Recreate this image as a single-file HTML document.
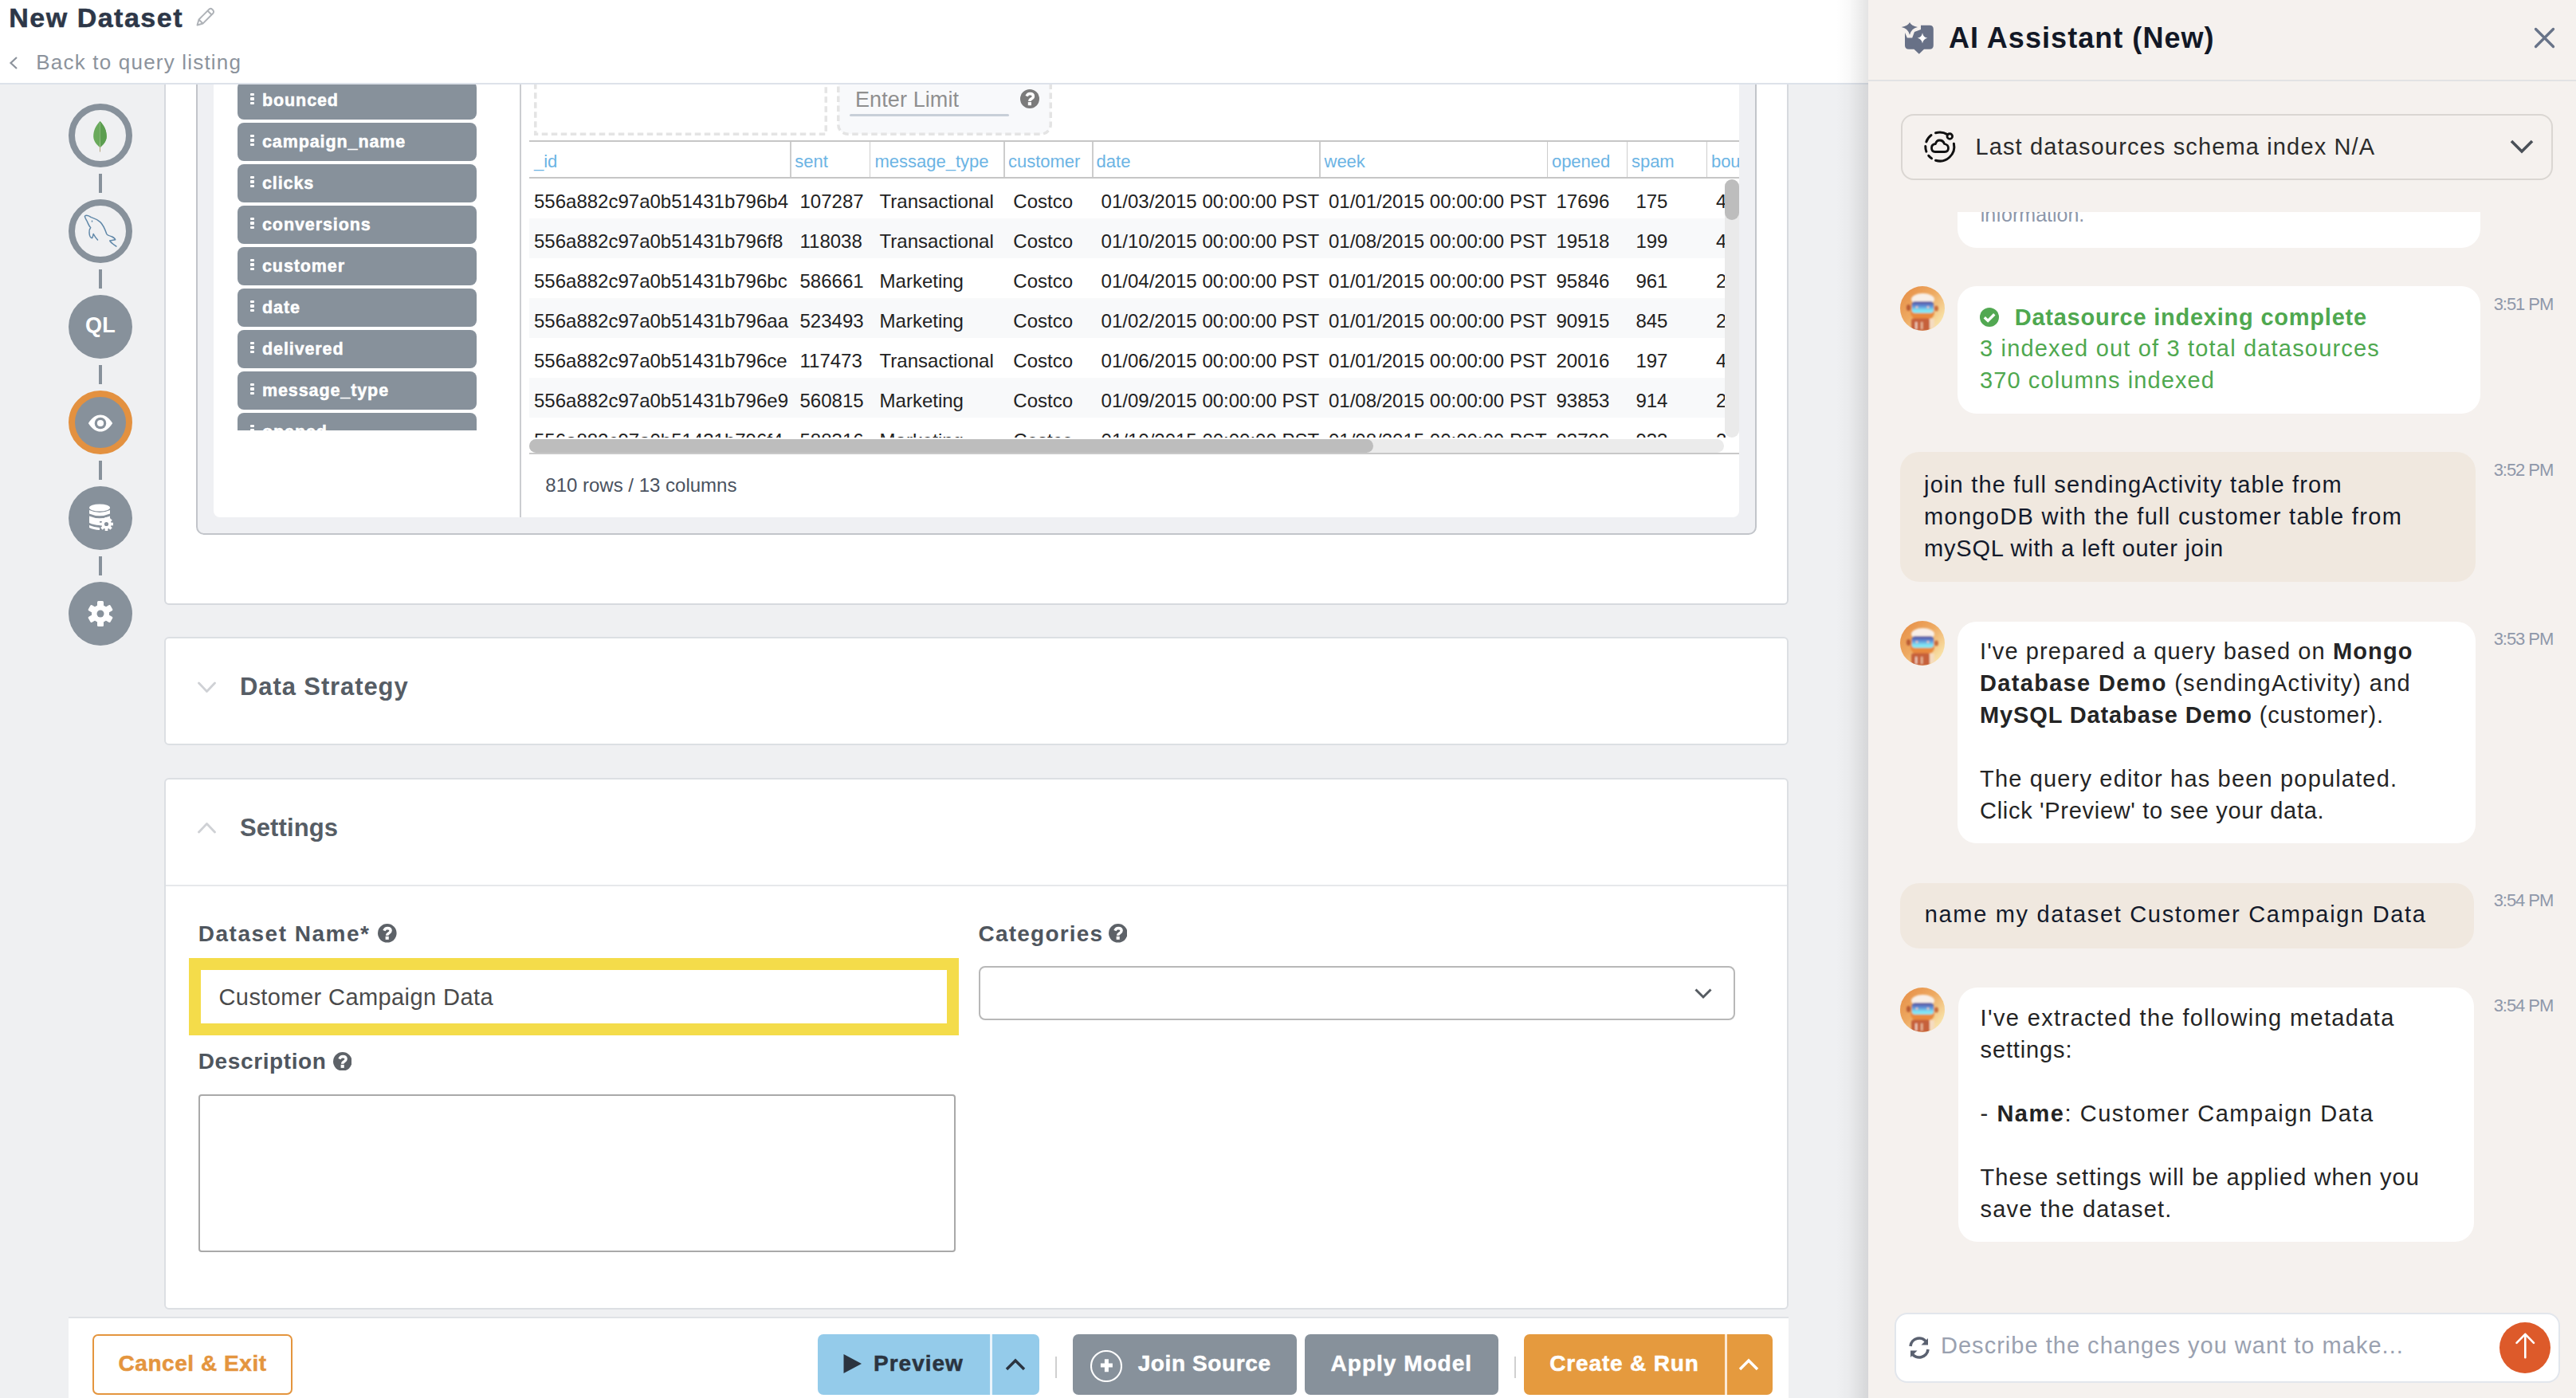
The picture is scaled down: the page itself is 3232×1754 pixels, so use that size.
<!DOCTYPE html>
<html><head><meta charset="utf-8"><style>
html,body{margin:0;padding:0;}
body{width:3232px;height:1754px;position:relative;overflow:hidden;background:#eff0f2;font-family:"Liberation Sans",sans-serif;}
.a{position:absolute;}
.t{position:absolute;line-height:1;white-space:nowrap;}
b{font-weight:700;}
</style></head><body>
<div class="a" style="left:206.0px;top:60.0px;width:2038.0px;height:698.6px;background:#fff;border:2px solid #d6d9de;border-radius:6px;box-sizing:border-box;"></div>
<div class="a" style="left:246.0px;top:40.0px;width:1958.0px;height:631.0px;background:#eff0f3;border:2px solid #c2c5ca;border-radius:10px;box-sizing:border-box;"></div>
<div class="a" style="left:268.0px;top:40.0px;width:1914.0px;height:609.0px;background:#fff;border-radius:0 0 8px 8px;"></div>
<div class="a" style="left:652.0px;top:40.0px;width:2.0px;height:609.0px;background:#cbcdd1;"></div>
<div class="a" style="left:298px;top:100px;width:300px;height:439.5px;overflow:hidden;"><div class="a" style="left:0;top:2px;width:300px;height:48px;background:#87919b;border-radius:8px;"></div><div class="a" style="left:16px;top:16.5px;width:4.5px;height:3.6px;background:#fff;border-radius:1px;"></div><div class="a" style="left:16px;top:22.0px;width:4.5px;height:3.6px;background:#fff;border-radius:1px;"></div><div class="a" style="left:16px;top:27.5px;width:4.5px;height:3.6px;background:#fff;border-radius:1px;"></div><div class="t" style="left:31px;top:15.7px;font-size:21.5px;color:#fff;font-weight:700;letter-spacing:0.9px;-webkit-text-stroke:0.5px #fff;">bounced</div><div class="a" style="left:0;top:54px;width:300px;height:48px;background:#87919b;border-radius:8px;"></div><div class="a" style="left:16px;top:68.5px;width:4.5px;height:3.6px;background:#fff;border-radius:1px;"></div><div class="a" style="left:16px;top:74.0px;width:4.5px;height:3.6px;background:#fff;border-radius:1px;"></div><div class="a" style="left:16px;top:79.5px;width:4.5px;height:3.6px;background:#fff;border-radius:1px;"></div><div class="t" style="left:31px;top:67.7px;font-size:21.5px;color:#fff;font-weight:700;letter-spacing:0.9px;-webkit-text-stroke:0.5px #fff;">campaign_name</div><div class="a" style="left:0;top:106px;width:300px;height:48px;background:#87919b;border-radius:8px;"></div><div class="a" style="left:16px;top:120.5px;width:4.5px;height:3.6px;background:#fff;border-radius:1px;"></div><div class="a" style="left:16px;top:126.0px;width:4.5px;height:3.6px;background:#fff;border-radius:1px;"></div><div class="a" style="left:16px;top:131.5px;width:4.5px;height:3.6px;background:#fff;border-radius:1px;"></div><div class="t" style="left:31px;top:119.7px;font-size:21.5px;color:#fff;font-weight:700;letter-spacing:0.9px;-webkit-text-stroke:0.5px #fff;">clicks</div><div class="a" style="left:0;top:158px;width:300px;height:48px;background:#87919b;border-radius:8px;"></div><div class="a" style="left:16px;top:172.5px;width:4.5px;height:3.6px;background:#fff;border-radius:1px;"></div><div class="a" style="left:16px;top:178.0px;width:4.5px;height:3.6px;background:#fff;border-radius:1px;"></div><div class="a" style="left:16px;top:183.5px;width:4.5px;height:3.6px;background:#fff;border-radius:1px;"></div><div class="t" style="left:31px;top:171.7px;font-size:21.5px;color:#fff;font-weight:700;letter-spacing:0.9px;-webkit-text-stroke:0.5px #fff;">conversions</div><div class="a" style="left:0;top:210px;width:300px;height:48px;background:#87919b;border-radius:8px;"></div><div class="a" style="left:16px;top:224.5px;width:4.5px;height:3.6px;background:#fff;border-radius:1px;"></div><div class="a" style="left:16px;top:230.0px;width:4.5px;height:3.6px;background:#fff;border-radius:1px;"></div><div class="a" style="left:16px;top:235.5px;width:4.5px;height:3.6px;background:#fff;border-radius:1px;"></div><div class="t" style="left:31px;top:223.7px;font-size:21.5px;color:#fff;font-weight:700;letter-spacing:0.9px;-webkit-text-stroke:0.5px #fff;">customer</div><div class="a" style="left:0;top:262px;width:300px;height:48px;background:#87919b;border-radius:8px;"></div><div class="a" style="left:16px;top:276.5px;width:4.5px;height:3.6px;background:#fff;border-radius:1px;"></div><div class="a" style="left:16px;top:282.0px;width:4.5px;height:3.6px;background:#fff;border-radius:1px;"></div><div class="a" style="left:16px;top:287.5px;width:4.5px;height:3.6px;background:#fff;border-radius:1px;"></div><div class="t" style="left:31px;top:275.7px;font-size:21.5px;color:#fff;font-weight:700;letter-spacing:0.9px;-webkit-text-stroke:0.5px #fff;">date</div><div class="a" style="left:0;top:314px;width:300px;height:48px;background:#87919b;border-radius:8px;"></div><div class="a" style="left:16px;top:328.5px;width:4.5px;height:3.6px;background:#fff;border-radius:1px;"></div><div class="a" style="left:16px;top:334.0px;width:4.5px;height:3.6px;background:#fff;border-radius:1px;"></div><div class="a" style="left:16px;top:339.5px;width:4.5px;height:3.6px;background:#fff;border-radius:1px;"></div><div class="t" style="left:31px;top:327.7px;font-size:21.5px;color:#fff;font-weight:700;letter-spacing:0.9px;-webkit-text-stroke:0.5px #fff;">delivered</div><div class="a" style="left:0;top:366px;width:300px;height:48px;background:#87919b;border-radius:8px;"></div><div class="a" style="left:16px;top:380.5px;width:4.5px;height:3.6px;background:#fff;border-radius:1px;"></div><div class="a" style="left:16px;top:386.0px;width:4.5px;height:3.6px;background:#fff;border-radius:1px;"></div><div class="a" style="left:16px;top:391.5px;width:4.5px;height:3.6px;background:#fff;border-radius:1px;"></div><div class="t" style="left:31px;top:379.7px;font-size:21.5px;color:#fff;font-weight:700;letter-spacing:0.9px;-webkit-text-stroke:0.5px #fff;">message_type</div><div class="a" style="left:0;top:418px;width:300px;height:48px;background:#87919b;border-radius:8px;"></div><div class="a" style="left:16px;top:432.5px;width:4.5px;height:3.6px;background:#fff;border-radius:1px;"></div><div class="a" style="left:16px;top:438.0px;width:4.5px;height:3.6px;background:#fff;border-radius:1px;"></div><div class="a" style="left:16px;top:443.5px;width:4.5px;height:3.6px;background:#fff;border-radius:1px;"></div><div class="t" style="left:31px;top:431.7px;font-size:21.5px;color:#fff;font-weight:700;letter-spacing:0.9px;-webkit-text-stroke:0.5px #fff;">opened</div></div>
<svg class="a" style="left:670.0px;top:40.0px;" width="368.0" height="130.0" viewBox="0 0 368 130" preserveAspectRatio="none"><rect x="1.75" y="1.75" width="364.5" height="126.5" fill="none" stroke="#e4e4e4" stroke-width="3.5" stroke-dasharray="7.5 4.5"/></svg>
<svg class="a" style="left:1050.0px;top:40.0px;" width="270.0" height="130.0" viewBox="0 0 270 130" preserveAspectRatio="none"><rect x="1.75" y="1.75" width="266.5" height="126.5" rx="12" fill="#f8f9fb" stroke="#e4e4e4" stroke-width="3.5" stroke-dasharray="7.5 4.5"/></svg>
<div class="t" style="left:1073.0px;top:111.5px;font-size:27px;color:#8f8f8f;letter-spacing:0.1px;">Enter Limit</div>
<div class="a" style="left:1066.0px;top:143.2px;width:200.0px;height:2.6px;background:#c8cfd8;border-radius:2px;"></div>
<svg class="a" style="left:1280.0px;top:112.0px;" width="24.0" height="24.0" viewBox="0 0 24 24" preserveAspectRatio="none"><circle cx="12" cy="12" r="12" fill="#7b7b7b"/><path d="M8.1 8.7 Q9.3 5.5 12.4 5.5 Q16.3 5.6 16.4 8.7 Q16.4 10.7 14.2 11.9 Q11.9 13.1 11.9 15.1" fill="none" stroke="#fff" stroke-width="3.5"/><rect x="9.8" y="16.1" width="4.2" height="4.1" fill="#fff"/></svg>
<div class="a" style="left:664.0px;top:176.0px;width:1518.0px;height:2.0px;background:#c6c6c6;"></div>
<div class="a" style="left:664.0px;top:222.0px;width:1518.0px;height:2.0px;background:#c6c6c6;"></div>
<div class="a" style="left:991.2px;top:178.0px;width:1.6px;height:44.0px;background:#cdcdcd;"></div>
<div class="a" style="left:1090.8px;top:178.0px;width:1.6px;height:44.0px;background:#cdcdcd;"></div>
<div class="a" style="left:1259.4px;top:178.0px;width:1.6px;height:44.0px;background:#cdcdcd;"></div>
<div class="a" style="left:1370.1px;top:178.0px;width:1.6px;height:44.0px;background:#cdcdcd;"></div>
<div class="a" style="left:1655.1px;top:178.0px;width:1.6px;height:44.0px;background:#cdcdcd;"></div>
<div class="a" style="left:1940.9px;top:178.0px;width:1.6px;height:44.0px;background:#cdcdcd;"></div>
<div class="a" style="left:2040.9px;top:178.0px;width:1.6px;height:44.0px;background:#cdcdcd;"></div>
<div class="a" style="left:2140.9px;top:178.0px;width:1.6px;height:44.0px;background:#cdcdcd;"></div>
<div class="a" style="left:0;top:0;width:2182px;height:224px;overflow:hidden;"><div class="t" style="left:670px;top:192.4px;font-size:22px;color:#6cb4e4;">_id</div><div class="t" style="left:997.2px;top:192.4px;font-size:22px;color:#6cb4e4;">sent</div><div class="t" style="left:1097.4px;top:192.4px;font-size:22px;color:#6cb4e4;">message_type</div><div class="t" style="left:1264.9px;top:192.4px;font-size:22px;color:#6cb4e4;">customer</div><div class="t" style="left:1375.6px;top:192.4px;font-size:22px;color:#6cb4e4;">date</div><div class="t" style="left:1661.5px;top:192.4px;font-size:22px;color:#6cb4e4;">week</div><div class="t" style="left:1946.9px;top:192.4px;font-size:22px;color:#6cb4e4;">opened</div><div class="t" style="left:2046.9px;top:192.4px;font-size:22px;color:#6cb4e4;">spam</div><div class="t" style="left:2146.9px;top:192.4px;font-size:22px;color:#6cb4e4;">bounced</div></div>
<div class="a" style="left:0;top:224px;width:2165px;height:324.5px;overflow:hidden;"><div class="t" style="left:670px;top:16.7px;font-size:24px;color:#222;">556a882c97a0b51431b796b4</div><div class="t" style="left:1003.5px;top:16.7px;font-size:24px;color:#222;">107287</div><div class="t" style="left:1103.6px;top:16.7px;font-size:24px;color:#222;">Transactional</div><div class="t" style="left:1271.3px;top:16.7px;font-size:24px;color:#222;">Costco</div><div class="t" style="left:1381.6px;top:16.7px;font-size:24px;color:#222;">01/03/2015 00:00:00 PST</div><div class="t" style="left:1667px;top:16.7px;font-size:24px;color:#222;">01/01/2015 00:00:00 PST</div><div class="t" style="left:1952.5px;top:16.7px;font-size:24px;color:#222;">17696</div><div class="t" style="left:2052.4px;top:16.7px;font-size:24px;color:#222;">175</div><div class="t" style="left:2153px;top:16.7px;font-size:24px;color:#222;">4</div><div class="a" style="left:664px;top:50px;width:1501px;height:50px;background:#f8f9fa;"></div><div class="t" style="left:670px;top:66.7px;font-size:24px;color:#222;">556a882c97a0b51431b796f8</div><div class="t" style="left:1003.5px;top:66.7px;font-size:24px;color:#222;">118038</div><div class="t" style="left:1103.6px;top:66.7px;font-size:24px;color:#222;">Transactional</div><div class="t" style="left:1271.3px;top:66.7px;font-size:24px;color:#222;">Costco</div><div class="t" style="left:1381.6px;top:66.7px;font-size:24px;color:#222;">01/10/2015 00:00:00 PST</div><div class="t" style="left:1667px;top:66.7px;font-size:24px;color:#222;">01/08/2015 00:00:00 PST</div><div class="t" style="left:1952.5px;top:66.7px;font-size:24px;color:#222;">19518</div><div class="t" style="left:2052.4px;top:66.7px;font-size:24px;color:#222;">199</div><div class="t" style="left:2153px;top:66.7px;font-size:24px;color:#222;">4</div><div class="t" style="left:670px;top:116.7px;font-size:24px;color:#222;">556a882c97a0b51431b796bc</div><div class="t" style="left:1003.5px;top:116.7px;font-size:24px;color:#222;">586661</div><div class="t" style="left:1103.6px;top:116.7px;font-size:24px;color:#222;">Marketing</div><div class="t" style="left:1271.3px;top:116.7px;font-size:24px;color:#222;">Costco</div><div class="t" style="left:1381.6px;top:116.7px;font-size:24px;color:#222;">01/04/2015 00:00:00 PST</div><div class="t" style="left:1667px;top:116.7px;font-size:24px;color:#222;">01/01/2015 00:00:00 PST</div><div class="t" style="left:1952.5px;top:116.7px;font-size:24px;color:#222;">95846</div><div class="t" style="left:2052.4px;top:116.7px;font-size:24px;color:#222;">961</div><div class="t" style="left:2153px;top:116.7px;font-size:24px;color:#222;">2</div><div class="a" style="left:664px;top:150px;width:1501px;height:50px;background:#f8f9fa;"></div><div class="t" style="left:670px;top:166.7px;font-size:24px;color:#222;">556a882c97a0b51431b796aa</div><div class="t" style="left:1003.5px;top:166.7px;font-size:24px;color:#222;">523493</div><div class="t" style="left:1103.6px;top:166.7px;font-size:24px;color:#222;">Marketing</div><div class="t" style="left:1271.3px;top:166.7px;font-size:24px;color:#222;">Costco</div><div class="t" style="left:1381.6px;top:166.7px;font-size:24px;color:#222;">01/02/2015 00:00:00 PST</div><div class="t" style="left:1667px;top:166.7px;font-size:24px;color:#222;">01/01/2015 00:00:00 PST</div><div class="t" style="left:1952.5px;top:166.7px;font-size:24px;color:#222;">90915</div><div class="t" style="left:2052.4px;top:166.7px;font-size:24px;color:#222;">845</div><div class="t" style="left:2153px;top:166.7px;font-size:24px;color:#222;">2</div><div class="t" style="left:670px;top:216.7px;font-size:24px;color:#222;">556a882c97a0b51431b796ce</div><div class="t" style="left:1003.5px;top:216.7px;font-size:24px;color:#222;">117473</div><div class="t" style="left:1103.6px;top:216.7px;font-size:24px;color:#222;">Transactional</div><div class="t" style="left:1271.3px;top:216.7px;font-size:24px;color:#222;">Costco</div><div class="t" style="left:1381.6px;top:216.7px;font-size:24px;color:#222;">01/06/2015 00:00:00 PST</div><div class="t" style="left:1667px;top:216.7px;font-size:24px;color:#222;">01/01/2015 00:00:00 PST</div><div class="t" style="left:1952.5px;top:216.7px;font-size:24px;color:#222;">20016</div><div class="t" style="left:2052.4px;top:216.7px;font-size:24px;color:#222;">197</div><div class="t" style="left:2153px;top:216.7px;font-size:24px;color:#222;">4</div><div class="a" style="left:664px;top:250px;width:1501px;height:50px;background:#f8f9fa;"></div><div class="t" style="left:670px;top:266.7px;font-size:24px;color:#222;">556a882c97a0b51431b796e9</div><div class="t" style="left:1003.5px;top:266.7px;font-size:24px;color:#222;">560815</div><div class="t" style="left:1103.6px;top:266.7px;font-size:24px;color:#222;">Marketing</div><div class="t" style="left:1271.3px;top:266.7px;font-size:24px;color:#222;">Costco</div><div class="t" style="left:1381.6px;top:266.7px;font-size:24px;color:#222;">01/09/2015 00:00:00 PST</div><div class="t" style="left:1667px;top:266.7px;font-size:24px;color:#222;">01/08/2015 00:00:00 PST</div><div class="t" style="left:1952.5px;top:266.7px;font-size:24px;color:#222;">93853</div><div class="t" style="left:2052.4px;top:266.7px;font-size:24px;color:#222;">914</div><div class="t" style="left:2153px;top:266.7px;font-size:24px;color:#222;">2</div><div class="t" style="left:670px;top:316.7px;font-size:24px;color:#222;">556a882c97a0b51431b796f4</div><div class="t" style="left:1003.5px;top:316.7px;font-size:24px;color:#222;">588316</div><div class="t" style="left:1103.6px;top:316.7px;font-size:24px;color:#222;">Marketing</div><div class="t" style="left:1271.3px;top:316.7px;font-size:24px;color:#222;">Costco</div><div class="t" style="left:1381.6px;top:316.7px;font-size:24px;color:#222;">01/10/2015 00:00:00 PST</div><div class="t" style="left:1667px;top:316.7px;font-size:24px;color:#222;">01/08/2015 00:00:00 PST</div><div class="t" style="left:1952.5px;top:316.7px;font-size:24px;color:#222;">93709</div><div class="t" style="left:2052.4px;top:316.7px;font-size:24px;color:#222;">933</div><div class="t" style="left:2153px;top:316.7px;font-size:24px;color:#222;">2</div></div>
<div class="a" style="left:2164.2px;top:224.5px;width:17.4px;height:324.5px;background:#eaeaea;border-radius:9px;"></div>
<div class="a" style="left:2164.2px;top:224.5px;width:17.4px;height:51.2px;background:#bdbdbd;border-radius:9px;"></div>
<div class="a" style="left:664.0px;top:550.5px;width:1499.0px;height:17.5px;background:#ebebeb;border-radius:9px;"></div>
<div class="a" style="left:664.0px;top:550.5px;width:1059.0px;height:17.5px;background:#bdbdbd;border-radius:9px;"></div>
<div class="a" style="left:664.0px;top:568.0px;width:1518.0px;height:2.0px;background:#c8c8c8;"></div>
<div class="t" style="left:684.3px;top:597.0px;font-size:24px;color:#4a5260;">810 rows / 13 columns</div>
<div class="a" style="left:206.0px;top:799.1px;width:2038.0px;height:136.3px;background:#fff;border:2px solid #dcdfe3;border-radius:6px;box-sizing:border-box;"></div>
<svg class="a" style="left:247.0px;top:853.0px;" width="25.0" height="18.0" viewBox="0 0 25 18" preserveAspectRatio="none"><path d="M2.5 4 L12.5 14.5 L22.5 4" fill="none" stroke="#cfd1d5" stroke-width="2.8" stroke-linecap="round" stroke-linejoin="round"/></svg>
<div class="t" style="left:301.0px;top:846.4px;font-size:31px;color:#565d65;font-weight:700;letter-spacing:0.9px;">Data Strategy</div>
<div class="a" style="left:206.0px;top:975.9px;width:2038.0px;height:667.6px;background:#fff;border:2px solid #dcdfe3;border-radius:6px;box-sizing:border-box;"></div>
<svg class="a" style="left:247.0px;top:1030.0px;" width="25.0" height="18.0" viewBox="0 0 25 18" preserveAspectRatio="none"><path d="M2.5 14 L12.5 3.5 L22.5 14" fill="none" stroke="#cfd1d5" stroke-width="2.8" stroke-linecap="round" stroke-linejoin="round"/></svg>
<div class="t" style="left:301.0px;top:1022.8px;font-size:31px;color:#565d65;font-weight:700;letter-spacing:0.1px;">Settings</div>
<div class="a" style="left:208.0px;top:1109.5px;width:2034.0px;height:2.0px;background:#e6e8eb;"></div>
<div class="t" style="left:248.8px;top:1158.3px;font-size:28px;color:#4f565e;font-weight:700;letter-spacing:1.5px;">Dataset Name*</div>
<svg class="a" style="left:474.3px;top:1159.2px;" width="23.6" height="23.6" viewBox="0 0 24 24" preserveAspectRatio="none"><circle cx="12" cy="12" r="12" fill="#5d6268"/><path d="M8.1 8.7 Q9.3 5.5 12.4 5.5 Q16.3 5.6 16.4 8.7 Q16.4 10.7 14.2 11.9 Q11.9 13.1 11.9 15.1" fill="none" stroke="#fff" stroke-width="3.5"/><rect x="9.8" y="16.1" width="4.2" height="4.1" fill="#fff"/></svg>
<div class="t" style="left:1227.6px;top:1158.3px;font-size:28px;color:#4f565e;font-weight:700;letter-spacing:1.2px;">Categories</div>
<svg class="a" style="left:1390.8px;top:1159.2px;" width="23.6" height="23.6" viewBox="0 0 24 24" preserveAspectRatio="none"><circle cx="12" cy="12" r="12" fill="#5d6268"/><path d="M8.1 8.7 Q9.3 5.5 12.4 5.5 Q16.3 5.6 16.4 8.7 Q16.4 10.7 14.2 11.9 Q11.9 13.1 11.9 15.1" fill="none" stroke="#fff" stroke-width="3.5"/><rect x="9.8" y="16.1" width="4.2" height="4.1" fill="#fff"/></svg>
<div class="a" style="left:237.0px;top:1202.0px;width:966.0px;height:97.0px;border:15.5px solid #f4dc4a;box-sizing:border-box;background:#fff;"></div>
<div class="t" style="left:274.5px;top:1237.4px;font-size:29px;color:#4a4a4a;letter-spacing:0.42px;">Customer Campaign Data</div>
<div class="t" style="left:248.8px;top:1318.3px;font-size:28px;color:#4f565e;font-weight:700;letter-spacing:0.6px;">Description</div>
<svg class="a" style="left:417.5px;top:1319.5px;" width="23.6" height="23.6" viewBox="0 0 24 24" preserveAspectRatio="none"><circle cx="12" cy="12" r="12" fill="#5d6268"/><path d="M8.1 8.7 Q9.3 5.5 12.4 5.5 Q16.3 5.6 16.4 8.7 Q16.4 10.7 14.2 11.9 Q11.9 13.1 11.9 15.1" fill="none" stroke="#fff" stroke-width="3.5"/><rect x="9.8" y="16.1" width="4.2" height="4.1" fill="#fff"/></svg>
<div class="a" style="left:248.8px;top:1372.8px;width:949.9px;height:198.4px;border:2px solid #a9a9a9;border-radius:4px;box-sizing:border-box;"></div>
<div class="a" style="left:1227.6px;top:1212.3px;width:949.8px;height:67.9px;border:2px solid #b8b8b8;border-radius:8px;box-sizing:border-box;"></div>
<svg class="a" style="left:2125.0px;top:1238.0px;" width="24.0" height="18.0" viewBox="0 0 24 18" preserveAspectRatio="none"><path d="M2.5 3.5 L12 13 L21.5 3.5" fill="none" stroke="#555b61" stroke-width="3"/></svg>
<div class="a" style="left:86.0px;top:1651.8px;width:2158.0px;height:102.2px;background:#fff;border-top:2px solid #dfe2e6;box-sizing:border-box;"></div>
<div class="a" style="left:116.3px;top:1674.3px;width:250.4px;height:75.5px;border:2.2px solid #e4953e;border-radius:7px;box-sizing:border-box;"></div>
<div class="t" style="left:148.5px;top:1697.0px;font-size:28px;color:#e4953e;font-weight:700;letter-spacing:0.55px;-webkit-text-stroke:0.5px #e4953e;">Cancel &amp; Exit</div>
<div class="a" style="left:1026.0px;top:1674.0px;width:278.0px;height:75.5px;background:#94cbea;border-radius:7px;"></div>
<div class="a" style="left:1241.5px;top:1674.0px;width:3.0px;height:75.5px;background:#eaf4fb;"></div>
<svg class="a" style="left:1056.7px;top:1698.0px;" width="25.0" height="26.0" viewBox="0 0 25 26" preserveAspectRatio="none"><path d="M1.5 1 L24 13 L1.5 25 Z" fill="#2b3440"/></svg>
<div class="t" style="left:1096.0px;top:1697.3px;font-size:28px;color:#2b3440;font-weight:700;letter-spacing:1.0px;-webkit-text-stroke:0.5px #2b3440;">Preview</div>
<svg class="a" style="left:1260.0px;top:1702.0px;" width="28.0" height="20.0" viewBox="0 0 28 20" preserveAspectRatio="none"><path d="M3 16 L14 5 L25 16" fill="none" stroke="#2b3440" stroke-width="3.5"/></svg>
<div class="a" style="left:1324.0px;top:1702.0px;width:2.0px;height:27.0px;background:#d0d0d0;"></div>
<div class="a" style="left:1346.0px;top:1674.0px;width:281.0px;height:75.5px;background:#87919b;border-radius:7px;"></div>
<svg class="a" style="left:1368.0px;top:1694.0px;" width="40.0" height="40.0" viewBox="0 0 40 40" preserveAspectRatio="none"><circle cx="20" cy="20" r="19" fill="none" stroke="#fff" stroke-width="2.1"/><path d="M20.4 11.3 V27.2 M12.9 19 H27.9" stroke="#fff" stroke-width="5"/></svg>
<div class="t" style="left:1427.7px;top:1697.3px;font-size:28px;color:#fff;font-weight:700;letter-spacing:0.6px;-webkit-text-stroke:0.5px #fff;">Join Source</div>
<div class="a" style="left:1637.4px;top:1674.0px;width:242.4px;height:75.5px;background:#87919b;border-radius:7px;"></div>
<div class="t" style="left:1669.6px;top:1697.3px;font-size:28px;color:#fff;font-weight:700;letter-spacing:1.0px;-webkit-text-stroke:0.5px #fff;">Apply Model</div>
<div class="a" style="left:1900.0px;top:1702.0px;width:2.0px;height:27.0px;background:#d0d0d0;"></div>
<div class="a" style="left:1912.0px;top:1674.0px;width:312.2px;height:75.5px;background:#e59a3e;border-radius:7px;"></div>
<div class="a" style="left:2164.0px;top:1674.0px;width:3.0px;height:75.5px;background:#fbe9d5;"></div>
<div class="t" style="left:1944.3px;top:1697.3px;font-size:28px;color:#fff;font-weight:700;letter-spacing:0.83px;-webkit-text-stroke:0.5px #fff;">Create &amp; Run</div>
<svg class="a" style="left:2180.0px;top:1702.0px;" width="28.0" height="20.0" viewBox="0 0 28 20" preserveAspectRatio="none"><path d="M3 16 L14 5 L25 16" fill="none" stroke="#fff" stroke-width="3.5"/></svg>
<div class="a" style="left:0.0px;top:0.0px;width:2344.0px;height:104.0px;background:#fff;"></div>
<div class="a" style="left:0.0px;top:104.0px;width:2344.0px;height:2.0px;background:#dde2ea;"></div>
<div class="t" style="left:11.3px;top:5.0px;font-size:34px;color:#2d3748;font-weight:700;letter-spacing:1.5px;-webkit-text-stroke:0.5px #2d3748;">New Dataset</div>
<svg class="a" style="left:244.0px;top:9.0px;" width="26.0" height="26.0" viewBox="0 0 26 26" preserveAspectRatio="none"><path d="M3.5 22.5 L5.5 15.5 L18.5 2.5 Q20.5 1 22.5 3 L23 3.5 Q24.8 5.5 23.5 7.5 L10.5 20.5 Z M5.5 15.5 L10.5 20.5 M16.5 4.5 L21.5 9.5" fill="none" stroke="#aeb2b7" stroke-width="1.9" stroke-linejoin="round"/></svg>
<svg class="a" style="left:10.0px;top:70.0px;" width="14.0" height="18.0" viewBox="0 0 14 18" preserveAspectRatio="none"><path d="M11 2 L3.5 9 L11 16" fill="none" stroke="#8c939c" stroke-width="2.2"/></svg>
<div class="t" style="left:45.3px;top:65.0px;font-size:26px;color:#8c939c;letter-spacing:1.2px;">Back to query listing</div>
<div class="a" style="left:124.0px;top:218.0px;width:4.0px;height:24.0px;background:#87919b;"></div>
<div class="a" style="left:124.0px;top:338.0px;width:4.0px;height:24.0px;background:#87919b;"></div>
<div class="a" style="left:124.0px;top:458.0px;width:4.0px;height:24.0px;background:#87919b;"></div>
<div class="a" style="left:124.0px;top:578.0px;width:4.0px;height:24.0px;background:#87919b;"></div>
<div class="a" style="left:124.0px;top:698.0px;width:4.0px;height:24.0px;background:#87919b;"></div>
<div class="a" style="left:86px;top:130px;width:80px;height:80px;border-radius:50%;border:8.5px solid #87919b;box-sizing:border-box;"></div>
<svg class="a" style="left:116.0px;top:151.0px;" width="19.0" height="40.0" viewBox="0 0 24 41" preserveAspectRatio="none"><path d="M12 1 C19 7 22.5 13 22.5 21 C22 28 16 32 12.5 34.5 L11.5 34.5 C8 32 2 28 1.5 21 C1.5 13 5 7 12 1 Z" fill="#6aaa5c"/><path d="M12 3 L12 34" stroke="#c8dcb8" stroke-width="0.8"/><path d="M12 34 L12 40.5" stroke="#b5a27a" stroke-width="1.3"/><path d="M12 1 C19 7 22.5 13 22.5 21 C22 28 16 32 12.5 34.5 L12 21 Z" fill="#5c9e50"/></svg>
<div class="a" style="left:86px;top:250px;width:80px;height:80px;border-radius:50%;border:8.5px solid #87919b;box-sizing:border-box;"></div>
<svg class="a" style="left:96.0px;top:250.0px;" width="60.0" height="80.0" viewBox="0 0 60 80" preserveAspectRatio="none"><path d="M10.3 21 C12 19.8 15.5 20.5 18.3 22.6 C21 23.5 25 24.5 29.8 28.6 C33 31.5 35.5 37 37.8 43.5 C38.5 45 40 45.5 44.6 47 C46.5 48 48.5 49.5 48.7 50.8 L41.8 52.1 C43 54.5 47 57 50.4 59.5" fill="none" stroke="#5f87a8" stroke-width="1.5" stroke-linejoin="round"/><path d="M10.3 21 C10.5 24 12.5 26 13.7 28.6 C14.8 31 15.5 33.5 17.7 35.5 C16.5 37 15.8 40 16 42 C16.2 45 17.5 48.5 19.5 48.7 C20.5 48 20.8 45 21.2 43.5 C22.5 46 24.5 49 26.9 51.5" fill="none" stroke="#5f87a8" stroke-width="1.5" stroke-linejoin="round"/><path d="M19.5 26.6 V28.6" stroke="#5f87a8" stroke-width="1.4"/></svg>
<div class="a" style="left:86px;top:370px;width:80px;height:80px;border-radius:50%;background:#87919b;box-sizing:border-box;"></div>
<div class="t" style="left:107.0px;top:395.4px;font-size:27px;color:#fff;font-weight:700;letter-spacing:0.3px;">QL</div>
<div class="a" style="left:86px;top:490px;width:80px;height:80px;border-radius:50%;background:#87919b;box-sizing:border-box;border:8.5px solid #e39140;"></div>
<svg class="a" style="left:109.9px;top:520.0px;" width="32.2" height="22.0" viewBox="0 0 32.2 22" preserveAspectRatio="none"><path d="M0.8 11 C6 3 11 0.4 16 0.4 C21 0.4 26 3 31.2 11 C26 19 21 21.6 16 21.6 C11 21.6 6 19 0.8 11 Z" fill="#fff"/><circle cx="16" cy="11" r="7.3" fill="#87919b"/><circle cx="16" cy="11" r="4.1" fill="#fff"/></svg>
<div class="a" style="left:86px;top:610px;width:80px;height:80px;border-radius:50%;background:#87919b;box-sizing:border-box;"></div>
<svg class="a" style="left:111.0px;top:632.0px;" width="31.0" height="34.0" viewBox="0 0 31 34" preserveAspectRatio="none"><ellipse cx="14" cy="5" rx="13" ry="4.5" fill="#fff"/><path d="M1 8 Q14 14 27 8 V12.5 Q14 18 1 12.5 Z" fill="#fff"/><path d="M1 15.5 Q14 21 27 15.5 V19.5 Q20 22.5 14 22 L14 27 Q6 26.5 1 24 Z" fill="#fff"/><path d="M1 27 Q7 29.5 14 30 V33 Q6 32.5 1 30 Z" fill="#fff"/><g transform="translate(22.5,25.5)"><circle r="6.2" fill="#fff"/><g fill="#fff"><rect x="-1.8" y="-8.5" width="3.6" height="17"/><rect x="-8.5" y="-1.8" width="17" height="3.6"/><rect x="-1.8" y="-8.5" width="3.6" height="17" transform="rotate(45)"/><rect x="-1.8" y="-8.5" width="3.6" height="17" transform="rotate(-45)"/></g><circle r="2.6" fill="#87919b"/></g></svg>
<div class="a" style="left:86px;top:730px;width:80px;height:80px;border-radius:50%;background:#87919b;box-sizing:border-box;"></div>
<svg class="a" style="left:110.0px;top:754.0px;" width="32.0" height="32.0" viewBox="0 0 32 32" preserveAspectRatio="none"><g transform="translate(16,16)"><circle r="11" fill="#fff"/><g fill="#fff"><rect x="-4" y="-16" width="8" height="32" rx="1.5"/><rect x="-4" y="-16" width="8" height="32" rx="1.5" transform="rotate(60)"/><rect x="-4" y="-16" width="8" height="32" rx="1.5" transform="rotate(-60)"/></g><circle r="4.5" fill="#87919b"/></g></svg>
<div class="a" style="left:2304.0px;top:0.0px;width:40.0px;height:1754.0px;background:linear-gradient(to right, rgba(0,0,0,0) 0%, rgba(0,0,0,0.025) 40%, rgba(0,0,0,0.105) 100%);"></div>
<div class="a" style="left:2344.0px;top:0.0px;width:888.0px;height:1754.0px;background:#f5f1ee;"></div>
<div class="a" style="left:2344.0px;top:100.0px;width:888.0px;height:2.0px;background:#e2e2e4;"></div>
<svg class="a" style="left:2384.0px;top:26.0px;" width="44.0" height="44.0" viewBox="0 0 44 44" preserveAspectRatio="none"><path d="M12 2 Q14 6.5 22 8 Q14 9.5 12 17.75 Q10 9.5 1.7 8 Q10 6.5 12 2 Z" fill="#687187"/><path d="M26 5.7 L37 5.7 Q41.8 5.7 41.8 10.5 L41.8 31 Q41.8 35.8 37 35.8 L30 35.8 L23.8 41.8 L17.5 35.8 L11 35.8 Q6 35.8 6 31 L6 14.9 L8.9 21.6 L15.2 21.6 L18 14 L26 11 Z" fill="#687187"/><path d="M28 15.2 Q29 20.8 34.3 21.8 Q29 22.8 28 28.6 Q27 22.8 21.8 21.8 Q27 20.8 28 15.2 Z" fill="#fff"/></svg>
<div class="t" style="left:2445.0px;top:29.5px;font-size:36px;color:#121826;font-weight:700;letter-spacing:1.05px;">AI Assistant (New)</div>
<svg class="a" style="left:3178.0px;top:33.0px;" width="29.0" height="29.0" viewBox="0 0 29 29" preserveAspectRatio="none"><path d="M3.5 3.5 L25.5 25.5 M25.5 3.5 L3.5 25.5" stroke="#687388" stroke-width="3.3" stroke-linecap="round"/></svg>
<div class="a" style="left:2385.0px;top:142.5px;width:818.0px;height:83.5px;border:2px solid #dad6d2;border-radius:16px;box-sizing:border-box;"></div>
<svg class="a" style="left:2400.0px;top:150.0px;" width="80.0" height="70.0" viewBox="0 0 80 70" preserveAspectRatio="none"><path d="M28.54 16.79 A18 18 0 0 1 43.20 18.65 M51.39 30.17 A18 18 0 0 1 28.54 51.21 M23.53 48.78 A18 18 0 0 1 19.73 45.23 M16.89 40.16 A18 18 0 0 1 15.81 33.50 M16.84 27.96 A18 18 0 0 1 23.04 19.57" fill="none" stroke="#111" stroke-width="3" stroke-linecap="round"/><circle cx="46.30" cy="21.05" r="3.3" fill="none" stroke="#111" stroke-width="2.8"/><path d="M28 40.5 Q23.5 40.5 23.5 35.5 Q23.5 31 28.5 30.5 Q29.5 26 33.5 26 Q38 26 39.5 30.5 Q44.5 31.5 44.5 35.8 Q44.5 40.5 40 40.5 Z" fill="none" stroke="#111" stroke-width="2.8" stroke-linejoin="round"/></svg>
<div class="t" style="left:2478.4px;top:169.7px;font-size:29px;color:#2b2b2b;letter-spacing:1.14px;">Last datasources schema index N/A</div>
<svg class="a" style="left:3148.0px;top:172.0px;" width="32.0" height="24.0" viewBox="0 0 32 24" preserveAspectRatio="none"><path d="M3 5 L16 18 L29 5" fill="none" stroke="#4a5058" stroke-width="3.6"/></svg>
<div class="a" style="left:0;top:265.8px;width:3232px;height:1360px;overflow:hidden;"><div class="a" style="left:0;top:-265.8px;width:3232px;height:1754px;"><div class="a" style="left:2456px;top:200px;width:656px;height:110.5px;background:#fff;border-radius:24px;"></div><div class="t" style="left:2484.7px;top:257.2px;font-size:25px;color:#8d97aa;">information.</div>
<svg class="a" style="left:2384px;top:359px;" width="56" height="56" viewBox="0 0 56 56"><defs><linearGradient id="avbg1" x1="0" y1="0" x2="1" y2="1"><stop offset="0" stop-color="#e58a42"/><stop offset="0.45" stop-color="#eeaa62"/><stop offset="0.8" stop-color="#f7dca0"/><stop offset="1" stop-color="#fbeec2"/></linearGradient><linearGradient id="avv1" x1="0" y1="0" x2="0" y2="1"><stop offset="0" stop-color="#5a4f96"/><stop offset="0.35" stop-color="#5b86d2"/><stop offset="0.75" stop-color="#7fe3f5"/><stop offset="1" stop-color="#8aeaf4"/></linearGradient><clipPath id="avc1"><circle cx="28" cy="28" r="28"/></clipPath><filter id="avf1" x="-10%" y="-10%" width="120%" height="120%"><feGaussianBlur stdDeviation="0.9"/></filter></defs><g clip-path="url(#avc1)"><rect width="56" height="56" fill="url(#avbg1)"/><g filter="url(#avf1)"><ellipse cx="10.5" cy="27" rx="2.6" ry="4" fill="#b85a35"/><ellipse cx="45.5" cy="28" rx="2.4" ry="3.6" fill="#c86a3a"/><rect x="13" y="18" width="30" height="24" rx="9" fill="#e9893e"/><ellipse cx="28.5" cy="16.5" rx="14.5" ry="7.5" fill="#f8efe8"/><rect x="14.7" y="19.3" width="27.4" height="14.4" rx="4" fill="url(#avv1)"/><circle cx="21" cy="26.5" r="1.4" fill="#f3c9b8"/><circle cx="35" cy="26.5" r="1.4" fill="#f3c9b8"/><rect x="14" y="40.5" width="23" height="16" rx="3" fill="#c6603a"/><rect x="19" y="45" width="2.5" height="9" fill="#f0d0c0"/><rect x="26" y="45" width="2.5" height="9" fill="#e8b89a"/><rect x="37" y="41" width="6" height="12" fill="#f5dcc0"/></g></g></svg><div class="a" style="left:2456px;top:359px;width:656px;height:160px;background:#fff;border-radius:24px;"></div><svg class="a" style="left:2484.0px;top:386.0px;" width="24.0" height="24.0" viewBox="0 0 24 24" preserveAspectRatio="none"><circle cx="12" cy="12" r="12" fill="#52a852"/><path d="M5.8 12.3 L10.2 16.4 L18.3 8.2" fill="none" stroke="#fff" stroke-width="3.4"/></svg>
<div class="t" style="left:2527.7px;top:384.1px;font-size:29px;color:#4fa84f;font-weight:700;letter-spacing:0.77px;">Datasource indexing complete</div>
<div class="t" style="left:2484.0px;top:423.4px;font-size:29px;color:#4fa84f;letter-spacing:1.18px;">3 indexed out of 3 total datasources</div>
<div class="t" style="left:2484.0px;top:463.4px;font-size:29px;color:#4fa84f;letter-spacing:1.1px;">370 columns indexed</div>
<div class="t" style="left:3128.7px;top:371.1px;font-size:22px;color:#8f98aa;letter-spacing:-1.05px;">3:51 PM</div>
<div class="a" style="left:2384px;top:567px;width:722px;height:163.39999999999998px;background:#f0e8df;border-radius:24px;"></div><div class="t" style="left:2414.0px;top:593.8px;font-size:29px;color:#131a2b;letter-spacing:1.19px;">join the full sendingActivity table from</div>
<div class="t" style="left:2414.0px;top:633.6px;font-size:29px;color:#131a2b;letter-spacing:1.31px;">mongoDB with the full customer table from</div>
<div class="t" style="left:2414.0px;top:673.6px;font-size:29px;color:#131a2b;letter-spacing:0.8px;">mySQL with a left outer join</div>
<div class="t" style="left:3128.7px;top:578.5px;font-size:22px;color:#8f98aa;letter-spacing:-1.05px;">3:52 PM</div>
<svg class="a" style="left:2384px;top:779px;" width="56" height="56" viewBox="0 0 56 56"><defs><linearGradient id="avbg2" x1="0" y1="0" x2="1" y2="1"><stop offset="0" stop-color="#e58a42"/><stop offset="0.45" stop-color="#eeaa62"/><stop offset="0.8" stop-color="#f7dca0"/><stop offset="1" stop-color="#fbeec2"/></linearGradient><linearGradient id="avv2" x1="0" y1="0" x2="0" y2="1"><stop offset="0" stop-color="#5a4f96"/><stop offset="0.35" stop-color="#5b86d2"/><stop offset="0.75" stop-color="#7fe3f5"/><stop offset="1" stop-color="#8aeaf4"/></linearGradient><clipPath id="avc2"><circle cx="28" cy="28" r="28"/></clipPath><filter id="avf2" x="-10%" y="-10%" width="120%" height="120%"><feGaussianBlur stdDeviation="0.9"/></filter></defs><g clip-path="url(#avc2)"><rect width="56" height="56" fill="url(#avbg2)"/><g filter="url(#avf2)"><ellipse cx="10.5" cy="27" rx="2.6" ry="4" fill="#b85a35"/><ellipse cx="45.5" cy="28" rx="2.4" ry="3.6" fill="#c86a3a"/><rect x="13" y="18" width="30" height="24" rx="9" fill="#e9893e"/><ellipse cx="28.5" cy="16.5" rx="14.5" ry="7.5" fill="#f8efe8"/><rect x="14.7" y="19.3" width="27.4" height="14.4" rx="4" fill="url(#avv2)"/><circle cx="21" cy="26.5" r="1.4" fill="#f3c9b8"/><circle cx="35" cy="26.5" r="1.4" fill="#f3c9b8"/><rect x="14" y="40.5" width="23" height="16" rx="3" fill="#c6603a"/><rect x="19" y="45" width="2.5" height="9" fill="#f0d0c0"/><rect x="26" y="45" width="2.5" height="9" fill="#e8b89a"/><rect x="37" y="41" width="6" height="12" fill="#f5dcc0"/></g></g></svg><div class="a" style="left:2456px;top:779.5px;width:650px;height:278.0999999999999px;background:#fff;border-radius:24px;"></div><div class="t" style="left:2484.0px;top:803.4px;font-size:29px;color:#242424;letter-spacing:1.11px;">I've prepared a query based on <b>Mongo</b></div>
<div class="t" style="left:2484.0px;top:843.4px;font-size:29px;color:#242424;letter-spacing:1.32px;"><b>Database Demo</b> (sendingActivity) and</div>
<div class="t" style="left:2484.0px;top:883.4px;font-size:29px;color:#242424;letter-spacing:0.88px;"><b>MySQL Database Demo</b> (customer).</div>
<div class="t" style="left:2484.0px;top:963.4px;font-size:29px;color:#242424;letter-spacing:1.17px;">The query editor has been populated.</div>
<div class="t" style="left:2484.0px;top:1003.4px;font-size:29px;color:#242424;letter-spacing:0.7px;">Click 'Preview' to see your data.</div>
<div class="t" style="left:3128.7px;top:790.9px;font-size:22px;color:#8f98aa;letter-spacing:-1.05px;">3:53 PM</div>
<div class="a" style="left:2384px;top:1107.5px;width:720px;height:82.5px;background:#f0e8df;border-radius:24px;"></div><div class="t" style="left:2414.7px;top:1133.2px;font-size:29px;color:#131a2b;letter-spacing:1.69px;">name my dataset Customer Campaign Data</div>
<div class="t" style="left:3128.7px;top:1118.5px;font-size:22px;color:#8f98aa;letter-spacing:-1.05px;">3:54 PM</div>
<svg class="a" style="left:2384px;top:1239px;" width="56" height="56" viewBox="0 0 56 56"><defs><linearGradient id="avbg3" x1="0" y1="0" x2="1" y2="1"><stop offset="0" stop-color="#e58a42"/><stop offset="0.45" stop-color="#eeaa62"/><stop offset="0.8" stop-color="#f7dca0"/><stop offset="1" stop-color="#fbeec2"/></linearGradient><linearGradient id="avv3" x1="0" y1="0" x2="0" y2="1"><stop offset="0" stop-color="#5a4f96"/><stop offset="0.35" stop-color="#5b86d2"/><stop offset="0.75" stop-color="#7fe3f5"/><stop offset="1" stop-color="#8aeaf4"/></linearGradient><clipPath id="avc3"><circle cx="28" cy="28" r="28"/></clipPath><filter id="avf3" x="-10%" y="-10%" width="120%" height="120%"><feGaussianBlur stdDeviation="0.9"/></filter></defs><g clip-path="url(#avc3)"><rect width="56" height="56" fill="url(#avbg3)"/><g filter="url(#avf3)"><ellipse cx="10.5" cy="27" rx="2.6" ry="4" fill="#b85a35"/><ellipse cx="45.5" cy="28" rx="2.4" ry="3.6" fill="#c86a3a"/><rect x="13" y="18" width="30" height="24" rx="9" fill="#e9893e"/><ellipse cx="28.5" cy="16.5" rx="14.5" ry="7.5" fill="#f8efe8"/><rect x="14.7" y="19.3" width="27.4" height="14.4" rx="4" fill="url(#avv3)"/><circle cx="21" cy="26.5" r="1.4" fill="#f3c9b8"/><circle cx="35" cy="26.5" r="1.4" fill="#f3c9b8"/><rect x="14" y="40.5" width="23" height="16" rx="3" fill="#c6603a"/><rect x="19" y="45" width="2.5" height="9" fill="#f0d0c0"/><rect x="26" y="45" width="2.5" height="9" fill="#e8b89a"/><rect x="37" y="41" width="6" height="12" fill="#f5dcc0"/></g></g></svg><div class="a" style="left:2456.7px;top:1239px;width:647.3000000000002px;height:319.29999999999995px;background:#fff;border-radius:24px;"></div><div class="t" style="left:2484.6px;top:1262.7px;font-size:29px;color:#242424;letter-spacing:1.36px;">I've extracted the following metadata</div>
<div class="t" style="left:2484.6px;top:1302.7px;font-size:29px;color:#242424;letter-spacing:0.86px;">settings:</div>
<div class="t" style="left:2484.6px;top:1383.3px;font-size:29px;color:#242424;letter-spacing:1.53px;">- <b>Name</b>: Customer Campaign Data</div>
<div class="t" style="left:2484.6px;top:1462.8px;font-size:29px;color:#242424;letter-spacing:1.03px;">These settings will be applied when you</div>
<div class="t" style="left:2484.6px;top:1502.8px;font-size:29px;color:#242424;letter-spacing:1.18px;">save the dataset.</div>
<div class="t" style="left:3128.7px;top:1251.0px;font-size:22px;color:#8f98aa;letter-spacing:-1.05px;">3:54 PM</div>
</div></div>
<div class="a" style="left:2377.0px;top:1646.8px;width:834.5px;height:88.3px;background:#fff;border:2px solid #e2e6ec;border-radius:16px;box-sizing:border-box;"></div>
<svg class="a" style="left:2392.0px;top:1676.0px;" width="32.0" height="30.0" viewBox="0 0 32 30" preserveAspectRatio="none"><path d="M5 13 A11 11 0 0 1 25.5 8.5" fill="none" stroke="#5a6170" stroke-width="3.6"/><path d="M27 3 L27 11.5 L18.5 11.5 Z" fill="#5a6170"/><path d="M27 17 A11 11 0 0 1 6.5 21.5" fill="none" stroke="#5a6170" stroke-width="3.6"/><path d="M5 27 L5 18.5 L13.5 18.5 Z" fill="#5a6170"/></svg>
<div class="t" style="left:2435.0px;top:1674.0px;font-size:29px;color:#9aa1b0;letter-spacing:1.02px;">Describe the changes you want to make...</div>
<svg class="a" style="left:3135.6px;top:1658.6px;" width="64.0" height="64.0" viewBox="0 0 64 64" preserveAspectRatio="none"><circle cx="32" cy="32" r="32" fill="#dd5a2a"/><path d="M32.3 44.2 V15 M21.5 25.9 L32.3 14.8 L43 25.9" fill="none" stroke="#fff" stroke-width="2.6" stroke-linecap="round" stroke-linejoin="round"/></svg>
</body></html>
